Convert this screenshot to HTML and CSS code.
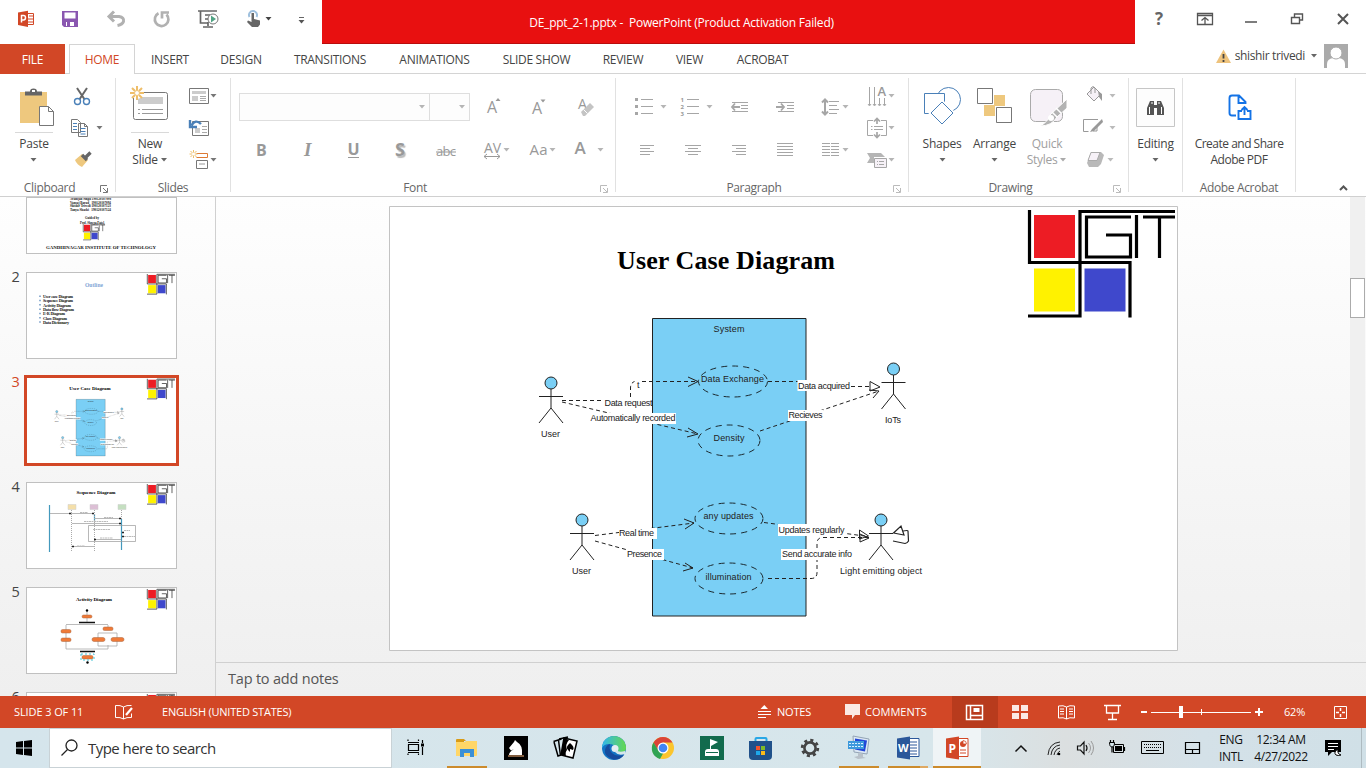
FILE: index.html
```html
<!DOCTYPE html>
<html lang="en">
<head>
<meta charset="utf-8">
<title>DE_ppt_2-1.pptx - PowerPoint</title>
<link rel="stylesheet" href="styles.css">
</head>
<body>
<svg class="defs" width="0" height="0">
  <defs>
    <g id="logo">
      <path d="M1034 215h41v43h-41z" fill="#ed1c24"/><path d="M1034 268.500h41v43h-41z" fill="#fff200"/><path d="M1084.500 268.500h41v43h-41z" fill="#3f48cc"/>
      <path d="M1029.500 210v52.500H1130v55M1028 316h52V211.500h95M1131 217h-44.500v40h44v-22H1106M1136.500 215v43M1143 217h32M1159.500 217v41" fill="none" stroke="#000" stroke-width="3.200"/>
    </g>
    <g id="actor"><circle cx="0" cy="0" r="6" fill="#7acff5" stroke="#222"/><path d="M0 6v19M-12 13.500h24M-12 40L0 25l12 15" fill="none" stroke="#222"/></g>
    <g id="diagram" class="diagram">
      <path d="M652.500 318.500h153.500v297.500h-153.500z" fill="#7acff5" stroke="#222"/>
      <g fill="none" stroke="#1c2a30" stroke-dasharray="6 5">
        <ellipse cx="733" cy="381.500" rx="34.500" ry="15.500"/><ellipse cx="729" cy="440.500" rx="31" ry="15.500"/>
        <ellipse cx="729" cy="518.500" rx="34" ry="15.500"/><ellipse cx="729" cy="578.500" rx="34" ry="15.500"/>
      </g>
      <g fill="none" stroke="#222" stroke-dasharray="4 3">
        <path d="M562 400.500h42M630.500 397v-9q0-5 4-6.500M642 381.500h55M562 402l136 32M768 381.500h30M851 386.500h19M760 431l119-40M595 535.500l99-12.500M595 541l98 27M764 522.500l104 14M768 578.500h43q6 0 6-6v-29q0-6 6-6h46"/>
      </g>
      <g fill="none" stroke="#222">
        <path d="M688 377l10 4.500-10 5M688 428l10 6-11 3M870 381.500l10 5.500-10 4zM869 390l10 1-6 7M684 519l10 4-9 6M685 563l8 5-10 3M859.500 530l9 6-9 3zM860 534l9 4-9 4z"/>
        <path d="M893.500 533l7.500-7 3 9zM903 531q5-1 5 0l.5 10q-1 2-3.500 2.500L893 541" stroke-width="1.200"/>
      </g>
      <use href="#actor" x="551" y="383"/><use href="#actor" x="893.500" y="369"/><use href="#actor" x="582" y="520"/><use href="#actor" x="881" y="520"/>
      <g fill="#fff"><path d="M604 398h48v10h-48zM590 413h86v11h-86zM797.500 380h53v11h-53zM788 410h35v11h-35zM619 528h38v11h-38zM627 549h37v11h-37zM778 524h67v12h-67zM781 549h71v11h-71z"/></g>
      <g fill="#222">
        <text x="637" y="388">t</text>
        <text x="713.500" y="332" textLength="31">System</text>
        <text x="701" y="382" textLength="63">Data Exchange</text><text x="713.500" y="440.500" textLength="31">Density</text>
        <text x="703.500" y="519" textLength="50">any updates</text><text x="705.500" y="579.500" textLength="46">illumination</text>
        <text x="541" y="437" textLength="19">User</text><text x="885" y="423" textLength="16">IoTs</text>
        <text x="572" y="573.500" textLength="19">User</text><text x="840" y="573.500" textLength="82">Light emitting object</text>
        <text x="604.500" y="405.500" textLength="48">Data request</text><text x="590.500" y="421" textLength="85">Automatically recorded</text>
        <text x="798" y="388.500" textLength="52">Data acquired</text><text x="788.500" y="418" textLength="34">Recieves</text>
        <text x="619" y="536" textLength="35">Real time</text><text x="627" y="557" textLength="35">Presence</text>
        <text x="778.500" y="532.500" textLength="66">Updates regularly</text><text x="782" y="557" textLength="70">Send accurate info</text>
      </g>
    </g>
    <path id="caret" d="M0 0h6l-3 3.500z"/>
    <path id="launch" d="M1.500 16V9.500H8M4 12l4 4M8.500 12v4.500H4" fill="none"/>
  </defs>
</svg>

<header class="titlebar">
  <div class="qat">
    <svg width="48" height="44" viewBox="0 0 48 44"><path d="M27 13.500h6.500v11H27" fill="#fff" stroke="#d24726"/><path d="M29 16h4M28 19h5M28 22h5" stroke="#d24726"/><path d="M18 12.500l10-1.800v16.300l-10-2z" fill="#d24726"/><path d="M21.500 22.500v-7h2q2 0 2 2.200t-2 2.200h-2" fill="none" stroke="#fff" stroke-width="1.500"/></svg>
    <svg width="44" height="44" viewBox="48 0 44 44"><path d="M62 11h16v16H64l-2-2z" fill="#8a57b0"/><path d="M64.500 12.500h11v6h-11zM66 22h8v4h-8z" fill="#fff"/><path d="M67 22h3v4h-3z" fill="#8a57b0"/></svg>
    <svg width="46" height="44" viewBox="92 0 46 44"><path d="M109 16.500h10q5.500 1 4.500 5-1 3-6 4M114 11.500l-5 5 5 5" fill="none" stroke="#b1b1b1" stroke-width="3"/></svg>
    <svg width="46" height="44" viewBox="138 0 46 44"><path d="M158.500 13.200a6.800 6.800 0 1 0 8 1.300M162 18.500v-6h7" fill="none" stroke="#b1b1b1" stroke-width="2.700"/></svg>
    <svg width="50" height="44" viewBox="184 0 50 44"><path d="M198 11h19M200.500 11v12h7M208 22v4M203 27h10M205 15h5M205 19h4" fill="none" stroke="#666" stroke-width="1.700"/><circle cx="213" cy="19" r="5" fill="#fff" stroke="#777"/><path d="M211 15.500l5 3.500-5 3.500z" fill="#51a384"/></svg>
    <svg width="46" height="44" viewBox="234 0 46 44"><path d="M249.500 17a4 4 0 1 1 7 0" fill="none" stroke="#9fc0de" stroke-width="2"/><path d="M251.500 13h2.500v6l6 1.500v4l-2 2.500h-6l-5-5 1-1.500 3.500 1.500z" fill="#666"/><use href="#caret" x="265.500" y="17" fill="#444"/></svg>
    <svg width="42" height="44" viewBox="280 0 42 44"><path d="M299 17.500h5" stroke="#666"/><use href="#caret" x="298.500" y="20" fill="#555"/></svg>
  </div>
  <div class="doc-title">DE_ppt_2-1.pptx -&nbsp; PowerPoint (Product Activation Failed)</div>
  <div class="winctl">
    <span class="help">?</span>
    <svg width="46" height="44" viewBox="1182 0 46 44"><path d="M1197.500 13.500h15v11h-15zM1197 15.500h16M1205 24v-6M1201.500 20.500l3.500-3 3.500 3" fill="none" stroke="#555" stroke-width="1.300"/></svg>
    <svg width="46" height="44" viewBox="1228 0 46 44"><path d="M1245 22h12" stroke="#666" stroke-width="1.700"/></svg>
    <svg width="46" height="44" viewBox="1274 0 46 44"><path d="M1291.500 17.500h8v6h-8zM1294.500 17v-3h8v6h-3" fill="none" stroke="#555" stroke-width="1.400"/></svg>
    <svg width="46" height="44" viewBox="1320 0 46 44"><path d="M1338 14l10 10M1348 14l-10 10" stroke="#555" stroke-width="2"/></svg>
  </div>
</header>

<nav class="tabs">
  <span class="tab file">FILE</span><span class="tab-gap"></span><span class="tab home">HOME</span>
  <span class="tab insert">INSERT</span><span class="tab design">DESIGN</span><span class="tab transitions">TRANSITIONS</span><span class="tab animations">ANIMATIONS</span><span class="tab slideshow">SLIDE SHOW</span><span class="tab review">REVIEW</span><span class="tab view">VIEW</span><span class="tab acrobat">ACROBAT</span>
  <div class="account">
    <svg width="20" height="24" viewBox="1214 44 20 24"><path d="M1222.500 49.500L1230 63h-15z" fill="#eec37d"/><path d="M1222.500 54v4.500M1222.500 60v2" stroke="#444" stroke-width="1.800"/></svg>
    <span>shishir trivedi</span>
    <svg class="drop" width="8" height="24" viewBox="0 0 8 24"><use href="#caret" x="1" y="10" fill="#666"/></svg>
    <svg width="24" height="24" viewBox="0 0 24 24"><path d="M0 0h24v24H0z" fill="#aaa"/><path d="M3 24v-4q0-5 6-6h6q6 1 6 6v4z" fill="#fff"/><circle cx="12" cy="9" r="6" fill="#fff" stroke="#aaa"/></svg>
  </div>
</nav>

<section class="ribbon">
  <div class="group clipboard">
    <div class="body">
      <div class="big paste"><svg width="68" height="56" viewBox="0 80 68 56"><path d="M20 92h27v31H20z" fill="#eec87e"/><path d="M25 95.500v-4h5q0-3 3.500-3t3.500 3h5v4z" fill="#666"/><path d="M32 90h3v2h-3z" fill="#fff"/><path d="M39.500 106.500h9l5 5v14h-14zM48.500 106.500v5h5" fill="#fff" stroke="#777"/><path d="M15 132.500h38" stroke="#d9d9d9"/></svg><span>Paste</span><svg width="68" height="16" viewBox="0 152 68 16"><use href="#caret" x="30.500" y="158" fill="#666"/></svg></div>
      <div class="tools">
        <svg width="47" height="32" viewBox="68 80 47 32"><path d="M77 88l8 12M87 88l-8 12" stroke="#666" stroke-width="2"/><g fill="#fff" stroke="#4a80b8" stroke-width="1.400"><circle cx="77.500" cy="101.500" r="3"/><circle cx="86.500" cy="101.500" r="3"/></g></svg>
        <svg width="47" height="32" viewBox="68 112 47 32"><g fill="#fff" stroke="#777"><path d="M71.500 119.500h6l3 3v10h-9zM78.500 123.500h6l3 3v10h-9zM84.500 123.500v3h3"/></g><path d="M73 123.500h4M73 126.500h4M73 129.500h4M80.500 128.500h5M80.500 131.500h5M80.500 134h5" stroke="#4a80b8"/><use href="#caret" x="96.500" y="126" fill="#777"/></svg>
        <svg width="47" height="32" viewBox="68 144 47 32"><path d="M82 154l6 6-6 7q-5-2-7-7z" fill="#eec87e"/><path d="M82 155l5 5M85 158l5.500-5.500" stroke="#666" stroke-width="3.300"/></svg>
      </div>
    </div>
    <div class="caption"><span>Clipboard</span><svg width="16" height="20" stroke="#777"><use href="#launch"/></svg></div>
  </div>
  <i class="sep"></i>
  <div class="group slides">
    <div class="body">
      <div class="big new"><svg width="68" height="56" viewBox="116 80 68 56"><rect x="133.500" y="92.500" width="34" height="27" rx="2" fill="#fff" stroke="#777"/><path d="M138 97h25v7h-25z" fill="#ccc"/><path d="M138 109.500h2M142 109.500h21M138 113.500h2M142 113.500h21" stroke="#999"/><circle cx="137" cy="93" r="6" fill="#fff"/><path d="M137 86v4M137 96v4M130 93h4M140 93h4M132 88l3 3M139 95l3 3M142 88l-3 3M135 95l-3 3" stroke="#eebe6a" stroke-width="2"/><circle cx="137" cy="93" r="2.500" fill="#fff" stroke="#eebe6a"/><path d="M131 132.500h38" stroke="#d9d9d9"/></svg><span>New</span><span>Slide <svg width="7" height="8"><use href="#caret" x="0" y="2" fill="#666"/></svg></span></div>
      <div class="tools">
        <svg width="46" height="32" viewBox="184 80 46 32"><path d="M189.500 88.500h19v15h-19z" fill="#fff" stroke="#777"/><path d="M192 91h14v3h-14zM192 96h6v5h-6z" fill="#ccc"/><path d="M200 96.500h6M200 98.500h6M200 100.500h6" stroke="#aaa"/><use href="#caret" x="210.500" y="94" fill="#777"/></svg>
        <svg width="46" height="32" viewBox="184 112 46 32"><path d="M192.500 121.500h16v14h-16z" fill="#fff" stroke="#777"/><path d="M195 128h5v5h-5z" fill="#ccc"/><path d="M202 126.500h5M202 129.500h5M202 132.500h5" stroke="#aaa"/><path d="M190 120v7h7M191.500 125.500q4-7 9.500-1.500" fill="none" stroke="#4a80b8" stroke-width="2.400"/></svg>
        <svg width="46" height="32" viewBox="184 144 46 32"><path d="M196.500 153.500h11v4h-11" fill="none" stroke="#dd7a35"/><path d="M196.500 160.500h11v8h-11z" fill="#fff" stroke="#777"/><path d="M199 163h6v2h-6z" fill="#ccc"/><path d="M193.500 150v8M189.500 154h8M190.500 151l6 6M196.500 151l-6 6" stroke="#eebe6a"/><circle cx="193.500" cy="154" r="1.500" fill="#fff"/><use href="#caret" x="210.500" y="158" fill="#777"/></svg>
      </div>
    </div>
    <div class="caption"><span>Slides</span></div>
  </div>
  <i class="sep"></i>
  <div class="group font">
    <div class="body">
      <div class="row">
        <div class="combo name"><svg width="8" height="8"><use href="#caret" x="1" y="2"/></svg></div><div class="combo size"><svg width="8" height="8"><use href="#caret" x="1" y="2"/></svg></div>
        <svg width="46" height="48" viewBox="469 80 46 48"><text x="487" y="113" class="m">A</text><path d="M495.500 101h5l-2.500-3z"/></svg>
        <svg width="46" height="48" viewBox="515 80 46 48"><text x="532" y="114" class="m">A</text><path d="M540.500 99.500h5l-2.500 3z"/></svg>
        <svg width="50" height="48" viewBox="561 80 50 48"><text x="578" y="109" class="m er">A</text><path d="M581 112l9-9 4 4-9 9h-2z" fill="#c4c4c4"/><path d="M583.500 109.500l4 4" stroke="#fff"/></svg>
      </div>
      <div class="row">
        <svg width="49" height="48" viewBox="236 128 49 48"><text x="256" y="156" class="b">B</text></svg>
        <svg width="46" height="48" viewBox="285 128 46 48"><text x="304" y="156" class="b i">I</text></svg>
        <svg width="46" height="48" viewBox="331 128 46 48"><text x="347.500" y="155" class="b">U</text><path d="M348 157.500h11" stroke="#999"/></svg>
        <svg width="46" height="48" viewBox="377 128 46 48"><text x="395" y="156" class="b s">S</text></svg>
        <svg width="46" height="48" viewBox="423 128 46 48"><text x="436" y="156" font-size="13" textLength="20">abc</text><path d="M436 152h20" stroke="#999"/></svg>
        <svg width="46" height="48" viewBox="469 128 46 48"><text x="484" y="153" font-size="14" textLength="17">AV</text><path d="M484 156.500h16M487 154l-3 2.500 3 2.500M497 154l3 2.500-3 2.500" fill="none" stroke="#999"/><use href="#caret" x="503.500" y="148"/></svg>
        <svg width="46" height="48" viewBox="515 128 46 48"><text x="529.500" y="155" font-size="15" textLength="18">Aa</text><use href="#caret" x="549.500" y="148"/></svg>
        <svg width="50" height="48" viewBox="561 128 50 48"><text x="574.500" y="154" class="fc">A</text><use href="#caret" x="597.500" y="148"/></svg>
      </div>
    </div>
    <div class="caption"><span>Font</span><svg width="16" height="20" stroke="#bbb"><use href="#launch"/></svg></div>
  </div>
  <i class="sep"></i>
  <div class="group paragraph">
    <div class="body">
      <div class="lists">
        <div class="row">
          <svg width="46" height="48" viewBox="624 80 46 48"><path d="M641 99.500h12M641 106.500h12M641 113.500h12"/><path d="M635 99.500h3M635 106.500h3M635 113.500h3" stroke-width="3"/><use href="#caret" x="660.500" y="105" class="f"/></svg>
          <svg width="46" height="48" viewBox="670 80 46 48"><path d="M687 99.500h12M687 106.500h12M687 113.500h12"/><g class="nums"><text x="680.500" y="102">1</text><text x="680.500" y="109">2</text><text x="680.500" y="116">3</text></g><use href="#caret" x="706.500" y="105" class="f"/></svg>
          <svg width="46" height="48" viewBox="716 80 46 48"><path d="M732 102.500h16M741 105.500h7M741 108.500h7M732 111.500h16"/><path d="M740 107h-8M735 103.500l-3 3.500 3 3.500" stroke-width="1.800"/></svg>
          <svg width="46" height="48" viewBox="762 80 46 48"><path d="M778 102.500h16M787 105.500h7M787 108.500h7M778 111.500h16"/><path d="M776 107h8M781 103.500l3 3.500-3 3.500" stroke-width="1.800"/></svg>
          <svg width="46" height="48" viewBox="808 80 46 48"><path d="M829 101.500h10M829 105.500h8M829 109.500h10M829 113.500h8"/><path d="M825 99v16M822 102.500l3-3 3 3M822 111.500l3 3 3-3" stroke-width="2"/><use href="#caret" x="842.500" y="105" class="f"/></svg>
        </div>
        <div class="row">
          <svg width="46" height="48" viewBox="624 128 46 48"><path d="M640 145.500h14M640 148.500h10M640 151.500h14M640 154.500h10"/></svg>
          <svg width="46" height="48" viewBox="670 128 46 48"><path d="M685 145.500h16M688 148.500h10M685 151.500h16M688 154.500h10"/></svg>
          <svg width="46" height="48" viewBox="716 128 46 48"><path d="M732 145.500h14M736 148.500h10M732 151.500h14M736 154.500h10"/></svg>
          <svg width="46" height="48" viewBox="762 128 46 48"><path d="M777 143.500h16M777 146.500h16M777 149.500h16M777 152.500h16M777 155.500h16"/></svg>
          <svg width="46" height="48" viewBox="808 128 46 48"><path d="M822 143.500h8M822 146.500h8M822 149.500h8M822 152.500h8M822 155.500h8M831 143.500h8M831 146.500h8M831 149.500h8M831 152.500h8M831 155.500h8"/><use href="#caret" x="842.500" y="148" class="f"/></svg>
        </div>
      </div>
      <div class="tools">
        <svg width="46" height="32" viewBox="854 80 46 32"><path d="M869.500 87v18M874.500 87v18M879.500 98v7M884.500 98v7M868 104l1.500 2 1.500-2M873 104l1.500 2 1.500-2M878 104l1.500 2 1.500-2M883 104l1.500 2 1.500-2"/><text x="877.500" y="96" class="vert">A</text><use href="#caret" x="888.500" y="94" class="f"/></svg>
        <svg width="46" height="32" viewBox="854 112 46 32"><path d="M873 120.500h-5.500v15h5.500M881 120.500h5.500v15H881M871 126.500h1.500M874 126.500h9M871 129.500h1.500M874 129.500h9"/><path d="M877 124v-5M874 121.500l3-3 3 3M877 132v5M874 134.500l3 3 3-3" stroke-width="1.700"/><use href="#caret" x="888.500" y="126" class="f"/></svg>
        <svg width="46" height="32" viewBox="854 144 46 32"><path class="solid" d="M867 153h14l4 4h-11v6h-7l3-5z"/><path d="M874.500 158.500h12v9h-12z" fill="#f6f1f7"/><path d="M877 161.500h1M879 161.500h5M877 164.500h1M879 164.500h5"/><use href="#caret" x="888.500" y="158" class="f"/></svg>
      </div>
    </div>
    <div class="caption"><span>Paragraph</span><svg width="16" height="20" stroke="#bbb"><use href="#launch"/></svg></div>
  </div>
  <i class="sep"></i>
  <div class="group drawing">
    <div class="body">
      <div class="big"><svg width="52" height="56" viewBox="916 80 52 56"><g fill="#fff" stroke="#4a80b8"><circle cx="948.500" cy="99.500" r="12"/><path d="M924.500 93.500h20v20h-20z"/><path d="M942 102l11 11-11 11-11-11z" stroke="#fff" stroke-width="4"/><path d="M942 102l11 11-11 11-11-11z"/></g></svg><span>Shapes</span><svg width="52" height="16" viewBox="916 152 52 16"><use href="#caret" x="939.500" y="158" fill="#666"/></svg></div>
      <div class="big"><svg width="53" height="56" viewBox="968 80 53 56"><path d="M994 95h11v11h-11zM984 105h11v11h-11z" fill="#eec87e"/><path d="M977.500 88.500h15v15h-15zM996.500 107.500h15v15h-15z" fill="#fff" stroke="#777"/></svg><span>Arrange</span><svg width="53" height="16" viewBox="968 152 53 16"><use href="#caret" x="991.500" y="158" fill="#666"/></svg></div>
      <div class="big off"><svg width="52" height="56" viewBox="1021 80 52 56"><rect x="1030.500" y="89.500" width="32" height="32" rx="5" fill="#f6f1f7" stroke="#aaa"/><path d="M1067 99v9l-10 9q-5 9-17 9 8-4 10-11z" fill="#b3b3b3" stroke="#fff"/><path d="M1052 112l5 5M1056 108l5 5" stroke="#fff" stroke-width="1.500"/><circle cx="1051" cy="118" r="3" fill="#fff"/></svg><span>Quick</span><span>Styles <svg width="7" height="8"><use href="#caret" x="0" y="2" fill="#aaa"/></svg></span></div>
      <div class="tools">
        <svg width="55" height="32" viewBox="1073 80 55 32"><path d="M1087 94l7-7 7 7-7 7zM1091 94v-6q2-3 4 0v5" fill="#f6f1f7" stroke="#999"/><path d="M1098 91l4 3v7l-3-4z" fill="#999"/><use href="#caret" x="1109.500" y="94" fill="#bbb"/></svg>
        <svg width="55" height="32" viewBox="1073 112 55 32"><path d="M1098 119.500h-14.500v12h5M1097 125v6h-4" fill="none" stroke="#999"/><path d="M1102 119l-10 10-2 3 4-1 9-9z" fill="#999"/><use href="#caret" x="1109.500" y="126" fill="#bbb"/></svg>
        <svg width="55" height="32" viewBox="1073 144 55 32"><path d="M1091 152h10l3 3-3 9-3 3h-9l-2-4z" fill="#b9b9b9"/><path d="M1091 152.500h9l-3 8h-9z" fill="#f6f1f7" stroke="#aaa"/><use href="#caret" x="1107.500" y="158" fill="#bbb"/></svg>
      </div>
    </div>
    <div class="caption"><span>Drawing</span><svg width="16" height="20" stroke="#bbb"><use href="#launch"/></svg></div>
  </div>
  <i class="sep"></i>
  <div class="group editing">
    <div class="body"><div class="big"><svg width="53" height="56" viewBox="1129 80 53 56"><path d="M1136.500 88.500h38v38h-38z" fill="#fdfdfd" stroke="#c6c6c6"/><path d="M1147 115v-7l3-7h4v4h3v-4h4l3 7v7h-7v-7h-3v7z" fill="#555"/><path d="M1149.500 107v7M1161.500 107v7M1152 102v2M1159 102v2" stroke="#fff"/></svg><span>Editing</span><svg width="53" height="16" viewBox="1129 152 53 16"><use href="#caret" x="1152.500" y="158" fill="#666"/></svg></div></div>
    <div class="caption"></div>
  </div>
  <i class="sep"></i>
  <div class="group adobe">
    <div class="body"><div class="big"><svg width="112" height="56" viewBox="1183 80 112 56"><path d="M1236 115.500h-4q-2.500 0-2.500-2.500v-15q0-2.500 2.500-2.500h7l6.500 6.500v2M1238.500 96v7h6M1242 111h-3.500v8h12v-8h-3.500M1244.500 115v-7.500M1241.500 110l3-3 3 3" fill="none" stroke="#1473e6" stroke-width="1.900"/></svg><span>Create and Share</span><span>Adobe PDF</span></div></div>
    <div class="caption"><span>Adobe Acrobat</span></div>
  </div>
  <i class="sep"></i>
  <svg class="collapse" width="24" height="20" viewBox="1332 176 24 20"><path d="M1340 190l3.500-3.500 3.500 3.500" fill="none" stroke="#555" stroke-width="2"/></svg>
</section>

<main class="work">
  <aside class="thumbs">
    <div class="item first"><b></b><svg class="thumb" width="151" height="57" viewBox="26 197 151 57"><g class="tiny" fill="#111"><text x="70" y="200" textLength="41" lengthAdjust="spacingAndGlyphs">Avanijad Singh 190120107098</text><text x="70" y="203.500" textLength="41" lengthAdjust="spacingAndGlyphs">Vansaj Barad &#160; 190120107094</text><text x="70" y="207" textLength="41" lengthAdjust="spacingAndGlyphs">Shishir Trivedi 190120107123</text><text x="70" y="210.800" textLength="41" lengthAdjust="spacingAndGlyphs">Tanya Shashi &#160; 190120107124</text><text x="85" y="218.500" textLength="14" lengthAdjust="spacingAndGlyphs">Guided by</text><text x="80" y="223.500" textLength="24" lengthAdjust="spacingAndGlyphs">Prof. Shreya Patel</text><text x="46" y="249" textLength="110" lengthAdjust="spacingAndGlyphs" class="inst">GANDHINAGAR INSTITUTE OF TECHNOLOGY</text></g><use href="#logo" transform="translate(83 224) scale(.15) translate(-1028 -210)"/></svg></div>
    <div class="item"><b>2</b><svg class="thumb" width="151" height="87" viewBox="26 272 151 87"><text x="85" y="287" class="ttl out" textLength="18" lengthAdjust="spacingAndGlyphs">Outline</text><g class="tiny" fill="#111"><text x="43" y="298" textLength="30">User case Diagram</text><text x="43" y="302.300" textLength="30">Sequence Diagram</text><text x="43" y="306.600" textLength="28">Activity Diagram</text><text x="43" y="310.900" textLength="31">Data flow Diagram</text><text x="43" y="315.200" textLength="22">E-R Diagram</text><text x="43" y="319.500" textLength="24">Class Diagram</text><text x="43" y="323.800" textLength="26">Data Dictionary</text></g><path d="M40 295.500v29" stroke="#6d96c4" stroke-width="1.500" stroke-dasharray="1.500 2.800"/><use href="#logo" transform="translate(147 274) scale(.19) translate(-1028 -210)"/></svg></div>
    <div class="item active"><b>3</b><svg class="thumb" width="155" height="91" viewBox="24 375 155 91"><g transform="translate(26 378) scale(.19) translate(-389 -206)"><text x="617" y="269" class="slide-title" textLength="218">User Case Diagram</text><use href="#diagram"/><use href="#logo" x="-2"/></g></svg></div>
    <div class="item"><b>4</b><svg class="thumb" width="151" height="87" viewBox="26 482 151 87"><text x="76.500" y="494" class="ttl" textLength="39">Sequence Diagram</text><path d="M68 504.500h8v5h-8z" fill="#f4dfaa" stroke="#ccc" stroke-width=".5"/><path d="M90 504.500h8v5h-8z" fill="#dcbfd5" stroke="#ccc" stroke-width=".5"/><path d="M118 504.500h8v5h-8z" fill="#c5dfc1" stroke="#ccc" stroke-width=".5"/><path d="M49.500 505v47M94.500 514v7M121.500 519v31" stroke="#4399bd" stroke-width="1.200"/><path d="M71.500 510v42M94.500 510v42M121.500 510v9" stroke="#aaa" stroke-dasharray="1 1"/><path d="M50 513.500h44M95 518.500h26M72 523.500h49M88.500 525.500h47v16h-47zM94 539.500h27M72 546.500h22" fill="none" stroke="#999" stroke-width=".7"/><path d="M80 512.500h8M104 517.500h9M84 521.500h24M93 529.500h17M100 538h13M77 546h8M124 530.500h6M124 536.500h12" stroke="#bbb" stroke-dasharray="2 .5"/><path d="M69 513.500h2M92 513.500h2M119 518.500h2M119 523.500h2M94 539.500h2M72 546.500h2M122 532.500h2M122 536.500h2" stroke="#222" stroke-width="1.500"/><use href="#logo" transform="translate(147 484) scale(.19) translate(-1028 -210)"/></svg></div>
    <div class="item"><b>5</b><svg class="thumb" width="151" height="87" viewBox="26 587 151 87"><text x="76" y="601" class="ttl" textLength="36">Activity Diagram</text><path d="M66 624.500h42M66 625v24h42v-4M87 610v12M108 625v4M98 633v13h19v-13z" fill="none" stroke="#aaa" stroke-width=".8"/><g fill="#ef7a38" stroke="#a86842" stroke-width=".5"><rect x="82" y="615" width="10" height="3" rx="1.500"/><rect x="61" y="629.500" width="10" height="3.500" rx="1.500"/><rect x="61" y="638" width="10" height="3.500" rx="1.500"/><rect x="103" y="627" width="10" height="3.500" rx="1.500"/><rect x="92" y="637.500" width="13" height="4" rx="2"/><rect x="111" y="637.500" width="13" height="4" rx="2"/><rect x="82" y="655.500" width="11" height="3.500" rx="1.500"/></g><path d="M79 622.500h16M80 651.500h15" stroke="#111" stroke-width="1.500"/><path d="M81 654h13v6H81z" fill="none" stroke="#45c6d8" stroke-dasharray="2 2"/><circle cx="87" cy="610.500" r="1.200"/><circle cx="87.500" cy="662.500" r="1.200"/><use href="#logo" transform="translate(147 589) scale(.19) translate(-1028 -210)"/></svg></div>
    <div class="item"><b>6</b><svg class="thumb" width="151" height="87" viewBox="26 692 151 87"><use href="#logo" transform="translate(147 694) scale(.19) translate(-1028 -210)"/></svg></div>
  </aside>
  <div class="editor">
    <div class="stage">
      <svg class="slide" width="789" height="445" viewBox="389 206 789 445"><path d="M389.500 206.500h788v444h-788z" fill="#fff" stroke="#c3c3c3"/><text x="617" y="269" class="slide-title" textLength="218">User Case Diagram</text><use href="#diagram"/><use href="#logo"/></svg>
      <div class="scroll"><div class="grip"></div></div>
    </div>
    <div class="notes">Tap to add notes</div>
  </div>
</main>

<footer class="status">
  <span class="slide-no">SLIDE 3 OF 11</span>
  <svg width="62" height="32" viewBox="100 696 62 32"><path d="M123.500 707q-3-2-8-1.500v12q5-.5 8 1.500zM123.500 707q3-2 8-1.500M123.500 719q3-2 8-1.500v-4" fill="none" stroke="#fff"/><path d="M126 715l6-7" stroke="#fff" stroke-width="2.200"/></svg>
  <span class="lang">ENGLISH (UNITED STATES)</span>
  <svg width="27" height="32" viewBox="750 696 27 32"><path d="M758 711.500h13M758 714.500h13M758 717.500h8" stroke="#fff"/><path d="M760.500 709h7.500l-3.700-4z" fill="#fff"/></svg>
  <span class="nt">NOTES</span>
  <svg width="25" height="32" viewBox="840 696 25 32"><path d="M845 704h15v11h-5l-3 4v-4h-7z" fill="#fbe9e4"/></svg>
  <span class="cm">COMMENTS</span>
  <svg class="on" width="46" height="32" viewBox="952 696 46 32"><path d="M966.500 705.500h16v14h-16zM970.500 705v15M970.500 715.500h12" fill="none" stroke="#fff" stroke-width="1.500"/><path d="M973.500 708h6v4h-6z" fill="#fff"/></svg>
  <svg width="46" height="32" viewBox="998 696 46 32"><path d="M1012 705h7v6h-7zM1021 705h7v6h-7zM1012 713h7v6h-7zM1021 713h7v6h-7z" fill="#fbe9e4"/></svg>
  <svg width="46" height="32" viewBox="1044 696 46 32"><path d="M1066.500 707q-3-2-8-1v12q5-1 8 1 3-2 8-1v-12q-5-1-8 1zv12M1060 709h4M1060 711.500h4M1060 714h4M1069 709h4M1069 711.500h4M1069 714h4" fill="none" stroke="#fff"/></svg>
  <svg width="46" height="32" viewBox="1090 696 46 32"><path d="M1104 705.500h17M1106.500 706v7h12v-7M1112.500 713v6M1108 719.500h9" fill="none" stroke="#fff" stroke-width="1.300"/></svg>
  <svg width="136" height="32" viewBox="1136 696 136 32"><path d="M1151 712.500h100M1201.500 709v6" stroke="#fff"/><path d="M1179 706h4v12h-4z" fill="#fff"/><path d="M1141 712h6M1255 712h8M1259 708v8" stroke="#fff" stroke-width="2"/></svg>
  <span class="pct">62%</span>
  <svg width="36" height="32" viewBox="1324 696 36 32"><path d="M1334.500 706.500h12v12h-12z" fill="none" stroke="#fff"/><path d="M1340.500 708v3M1340.500 714v3M1336 712.500h3M1342 712.500h3" stroke="#fff" stroke-width="1.500"/></svg>
</footer>

<footer class="taskbar">
  <svg width="48" height="40" viewBox="0 728 48 40"><path d="M16 742l7-1v6.500h-7zM24 741l8-1v7.500h-8zM16 748.500h7v6.500l-7-1zM24 748.500h8v7.500l-8-1z"/></svg>
  <div class="search"><svg width="39" height="38" viewBox="49 729 39 38"><circle cx="70.500" cy="745.500" r="5.500" fill="none" stroke="#222" stroke-width="1.300"/><path d="M66.500 749.500l-6 6" stroke="#222" stroke-width="1.300"/></svg><span>Type here to search</span></div>
  <svg width="49" height="40" viewBox="392 728 49 40"><path d="M408 741v-1.500M418.500 741v-1.500M408 742.500h11M408.500 744.500h10v6h-10zM408 752.500h11M408 755v-1.500M418.500 755v-1.500M422.500 740v3M422.500 747v8" fill="none" stroke="#000" stroke-width="1.200"/><path d="M421 743.500h3v3h-3z"/></svg>
  <svg width="50" height="40" viewBox="441 728 50 40"><path d="M456 740q0-1 1-1h7l2 2h-2v4h-8z" fill="#d99b16"/><path d="M456 742h9l1-1h11v14q0 1-1 1h-20z" fill="#ffd667"/><path d="M460 757v-8h14v8h-4v-4h-6v4z" fill="#3b90d6"/><path d="M447 766h40v2h-40z" fill="#cc8b2c"/></svg>
  <svg width="49" height="40" viewBox="491 728 49 40"><path d="M504 736h24v24h-24z"/><path d="M508 755h16v2h-16z" fill="#805b3d"/><path d="M509 755q0-3 5-6l-3 1.500-2-2.500 5-6 1-2 2 2q6 3 5 13z" fill="#fff"/></svg>
  <svg width="49" height="40" viewBox="540 728 49 40"><path d="M553.500 741.500l8-2.500M554 742l4 14 3-1M559 739l9-2M558.500 740l2 16" fill="none" stroke="#000" stroke-width="1.500"/><path d="M564 738l13 3-4 17-12-3z" fill="#fff" stroke="#000" stroke-width="1.500"/><path d="M564 738l-3 17 5 1q-1-4 1-6-2-6 2-10z"/><path d="M570 743q5 4 3 7l-3-1v3l-2-2q-3-3 2-7z"/></svg>
  <svg width="49" height="40" viewBox="589 728 49 40"><defs><linearGradient id="edge"><stop stop-color="#31b7ed"/><stop offset="1" stop-color="#65d84f"/></linearGradient></defs><circle cx="614" cy="748" r="12" fill="#1274c4"/><path d="M602 748a12 12 0 0 1 24 0q0 5-6 5-5 0-4-4-1-5-7-5-5 0-7 4z" fill="url(#edge)"/><path d="M610 744q-2 8 5 11 5 1 9 0-5 6-12 4-8-3-7-9 1-5 5-6z" fill="#164c9d"/><circle cx="615" cy="748.500" r="3.500" fill="#e3eef2"/><path d="M616 750q3 3 9 1v3q-7 2-10-2z" fill="#d5e5eb"/></svg>
  <svg width="49" height="40" viewBox="638 728 49 40"><circle cx="663" cy="748" r="11" fill="#fbc52d"/><path d="M653.500 742.500a11 11 0 0 1 19 0H663l-5 8z" fill="#db4437"/><path d="M653.500 742.500l5 8 4.500 3-3 5.500a11 11 0 0 1-6.500-16.500z" fill="#30a353"/><circle cx="663" cy="748" r="5.500" fill="#fff"/><circle cx="663" cy="748" r="4.300" fill="#4285f4"/></svg>
  <svg width="49" height="40" viewBox="687 728 49 40"><path d="M700 736h24v24h-24z" fill="#126b4d"/><path d="M705 752q0-3 3-3h8q3 0 3 3v4h-14z" fill="#fff"/><path d="M706 752.500h12" stroke="#126b4d"/><path d="M710 750v-11l8 3-7 4v4z" fill="#fff"/></svg>
  <svg width="49" height="40" viewBox="736 728 49 40"><path d="M755.500 743v-4q0-1 1-1h9q1 0 1 1v4" fill="none" stroke="#28a7e6" stroke-width="2"/><path d="M749 741h23v15q0 4-4 4h-15q-4 0-4-4z" fill="#20518a"/><path d="M756 746h4v4h-4z" fill="#f2542d"/><path d="M761 746h4v4h-4z" fill="#80bb27"/><path d="M756 751h4v4h-4z" fill="#1ea7ea"/><path d="M761 751h4v4h-4z" fill="#fbba19"/></svg>
  <svg width="49" height="40" viewBox="785 728 49 40"><circle cx="810" cy="748" r="7.800" fill="none" stroke="#444" stroke-width="2.800" stroke-dasharray="3.063 3.063"/><circle cx="810" cy="748" r="5.600" fill="none" stroke="#444" stroke-width="2.600"/></svg>
  <svg width="49" height="40" viewBox="834 728 49 40"><path d="M853 736l16 3-2 15-13-2z" fill="#dce8f4" stroke="#93a4b5"/><path d="M855 738.500l12 2-2 11-10-2z" fill="#2146d7"/><path d="M848 741h16v8h-16z" fill="#3c99dc"/><path d="M849 743.500h14M849 746.500h14" stroke="#d9f0ff" stroke-dasharray="2 1"/><path d="M858 753l5 1v3l3 1-8 1-4-2 4-1z" fill="#b8c1c9"/><path d="M839 766h40v2h-40z" fill="#cc8b2c"/></svg>
  <svg width="50" height="40" viewBox="883 728 50 40"><path d="M907 738.500h12v18h-12z" fill="#fff" stroke="#2b579a"/><path d="M910 742h7M910 745h7M910 748h7M910 751h7M910 754h7" stroke="#2b579a"/><path d="M897 738.500l13-2v23l-13-2z" fill="#2b579a"/><text x="898" y="752" class="app word">W</text><path d="M888 766h40v2h-40z" fill="#cc8b2c"/><path d="M920 766h8v2h-8z" fill="#dfa962"/></svg>
  <svg class="running" width="48" height="40" viewBox="933 728 48 40"><path d="M957 738.500h11v18h-11z" fill="#fff" stroke="#d24726"/><circle cx="963" cy="744" r="3" fill="#d24726"/><path d="M963 744v-3.500a3.500 3.500 0 0 1 3.500 3.500z" fill="#fff" stroke="#d24726" stroke-width=".8"/><path d="M960 750h6M960 753h6" stroke="#d24726"/><path d="M946 738.500l13-2v23l-13-2z" fill="#d24726"/><text x="948.500" y="752.500" class="app">P</text><path d="M933 766h48v2h-48z" fill="#cc8b2c"/></svg>
  <svg class="tray" width="55" height="40" viewBox="981 728 55 40"><path d="M1015.500 751.500l5.500-5.500 5.500 5.500" fill="none" stroke="#111" stroke-width="1.500"/></svg>
  <svg width="33" height="40" viewBox="1036 728 33 40"><g fill="none" stroke="#222"><path d="M1048 755q1-12 12-13M1051 755q1-9 9-10M1054 755q1-6 6-7M1057 755q1-3 3-4"/></g><circle cx="1059" cy="754" r="1.300"/></svg>
  <svg width="31" height="40" viewBox="1069 728 31 40"><path d="M1077.500 746h3l3.500-4v12l-3.500-4h-3zM1086 745q2 3 0 6" fill="none" stroke="#111" stroke-width="1.200"/><path d="M1088.500 743q4 5 0 10M1091 741q5 7 0 14" fill="none" stroke="#999"/></svg>
  <svg width="36" height="40" viewBox="1100 728 36 40"><path d="M1113.500 744.500h10v8h-10z" fill="none" stroke="#000"/><path d="M1115 746h7v5h-7z"/><path d="M1124.500 747v4M1110.500 740v3M1113.500 740v3M1112 746v6.500" stroke="#000" stroke-width="1.200"/><path d="M1109.500 742.500h5q0 4.500-2.500 4.500t-2.500-4.500z" fill="#d5e5eb" stroke="#000"/></svg>
  <svg width="36" height="40" viewBox="1136 728 36 40"><path d="M1141.500 741.500h22v12h-22z" fill="none" stroke="#000"/><path d="M1144 744.500h18M1144 747.500h18" stroke="#000" stroke-dasharray="1 1"/><path d="M1146 750.500h13" stroke="#000"/></svg>
  <svg width="40" height="40" viewBox="1172 728 40 40"><path d="M1185.500 742.500h14v11h-14zM1185 749.500h15M1192.500 750v4" fill="none" stroke="#000" stroke-width="1.200"/></svg>
  <div class="tray-text lang2"><span>ENG</span><span>INTL</span></div>
  <div class="tray-text clock"><span>12:34 AM</span><span>4/27/2022</span></div>
  <svg width="54" height="40" viewBox="1312 728 54 40"><path d="M1325 740h16v12h-9l-4 4v-4h-3z"/><path d="M1328 743.500h10M1328 746.500h10M1328 749.500h6" stroke="#fff"/><path d="M1338 749q-5 3-2 6 2 1 5 0-4-1-3-6z" fill="#fff" stroke="#000"/><path d="M1361.500 728v40" stroke="#aebbc1"/></svg>
</footer>
</body>
</html>
```
FILE: styles.css
```css
* { box-sizing: border-box; }
body { margin: 0; width: 1366px; height: 768px; overflow: hidden; background: #fff; color: #444; font: 12px/16px "Open Sans", "Noto Sans", sans-serif; letter-spacing: -.35px; display: flex; flex-direction: column; }
svg { display: block; flex: none; }
.defs { position: absolute; }

.titlebar { display: flex; height: 44px; flex: none; }
.qat, .winctl { display: flex; }
.doc-title { width: 813px; height: 44px; background: #e81010; border-bottom: 1px solid #b90c0c; color: #fff; text-align: center; line-height: 45px; padding-right: 94px; letter-spacing: -.22px; }
.winctl { padding-left: 1px; }
.help { width: 46px; text-align: center; font-size: 17px; font-weight: 700; line-height: 38px; color: #666; }

.tabs { display: flex; height: 30px; flex: none; }
.tab, .tab-gap { border-bottom: 1px solid #d4d4d4; text-align: center; line-height: 31px; letter-spacing: -.3px; white-space: nowrap; }
.tab-gap { width: 4px; }
.file { width: 65px; background: #d24726; border-color: #d24726; color: #fff; }
.home { width: 66px; border: 1px solid #d4d4d4; border-bottom: 0; line-height: 29px; color: #d24726; }
.insert { width: 70px; } .design { width: 72px; } .transitions { width: 106px; } .animations { width: 103px; }
.slideshow { width: 101px; } .review { width: 72px; } .view { width: 61px; } .acrobat { width: 85px; }
.account { flex: 1; display: flex; border-bottom: 1px solid #d4d4d4; padding-right: 18px; justify-content: flex-end; line-height: 24px; }
.account svg + span { margin-right: 5px; }
.drop { margin-right: 6px; }

.ribbon { display: flex; height: 123px; flex: none; border-bottom: 1px solid #d0d0d0; }
.sep { width: 1px; height: 114px; margin-top: 4px; background: #e1e1e1; flex: none; }
.group { padding-top: 6px; flex: none; }
.body { display: flex; height: 96px; }
.caption { display: flex; height: 20px; line-height: 24px; color: #666; letter-spacing: -.35px; }
.caption span { flex: 1; text-align: center; }
.caption svg { fill: none; }
.clipboard { width: 115px; } .slides { width: 114px; } .font { width: 384px; } .paragraph { width: 292px; }
.drawing { width: 219px; } .editing { width: 53px; } .adobe { width: 112px; }
.big { display: flex; flex-direction: column; align-items: center; white-space: nowrap; letter-spacing: -.25px; }
.big span { line-height: 16px; }
.big span svg { display: inline-block; }
.adobe .big { letter-spacing: -.5px; }
.off { color: #a0a0a0; }
.row { display: flex; height: 48px; }
.font .body { display: block; padding-left: 5px; }
.font .row svg { fill: #999; letter-spacing: 0; }
.font .row use { fill: #b5b5b5; }
.combo { border: 1px solid #dedede; background: #fdfdfd; height: 28px; margin-top: 13px; padding: 9px 3px; display: flex; justify-content: flex-end; }
.name { width: 191px; margin-left: 3px; }
.size { width: 41px; margin-left: -1px; margin-right: -1px; }
.b { font-size: 16px; font-weight: 700; }
.m { font-size: 16px; font-weight: 500; }
.er { font-size: 14px; }
.fc { font-size: 17px; font-weight: 600; }
.i { font-family: "Liberation Serif", serif; font-style: italic; font-size: 19px; }
.s { font-size: 18px; text-shadow: 1.5px 1.5px 1px #bbb; }
.paragraph .body { padding-left: 8px; }
.paragraph .body svg { stroke: #a6a6a6; fill: none; }
.f, .solid { fill: #b5b5b5; stroke: none; }
.nums, .vert { fill: #999; stroke: none; font-size: 6px; font-weight: 700; }
.vert { font-size: 13px; font-weight: 600; }
.drawing .body { padding-left: 7px; }
.collapse { margin: 102px 10px 0 auto; }

.work { display: flex; height: 499px; flex: none; background: linear-gradient(#fefefe, #efefef); }
.thumbs { width: 216px; height: 499px; overflow: hidden; border-right: 1px solid #d0d0d0; }
.item { display: flex; height: 105px; }
.item b { width: 26px; padding-left: 11.5px; font-weight: 400; font-size: 14.500px; line-height: 10px; }
.first { height: 75px; }
.thumb { background: #fff; outline: 1px solid #c0c0c0; outline-offset: -1px; }
.active { color: #d24726; }
.active b { width: 24px; }
.active .thumb { outline: 3px solid #d24726; outline-offset: -3px; margin-top: -2px; }
.tiny, .ttl { font: bold 4.200px "Liberation Serif", serif; letter-spacing: 0; }
.ttl { font-size: 5px; }
.out { fill: #7fa5d5; font-size: 5.500px; }
.inst { font-size: 4.700px; }
.slide-title { font: bold 26px "Liberation Serif", serif; letter-spacing: 0; fill: #000; }
.diagram { font: 9px "Liberation Sans", Arial, sans-serif; letter-spacing: 0; }
.editor { flex: 1; display: flex; flex-direction: column; }
.stage { height: 465px; display: flex; padding: 0; }
.slide { margin: 9px 172px 0 173px; }
.scroll { width: 15px; height: 445px; background: #f0f0f0; padding-top: 81px; }
.grip { height: 40px; background: #fff; border: 1px solid #ababab; }
.notes { flex: 1; border-top: 1px solid #d0d0d0; padding: 8px 11px 8px 12px; font-size: 14.500px; letter-spacing: -.2px; color: #555; }

.status { display: flex; height: 32px; flex: none; background: #d24726; color: #fff; line-height: 32px; font-size: 11px; letter-spacing: -.22px; }
.slide-no { width: 100px; padding-left: 14px; letter-spacing: -.1px; line-height: 31px; }
.lang { width: 588px; }
.nt { width: 63px; }
.cm { width: 87px; letter-spacing: 0; }
.on { background: #b83b1d; }
.pct { width: 52px; padding-left: 12px; }

.taskbar { display: flex; height: 40px; flex: none; background: linear-gradient(90deg, #d5e5ec 0, #d7e6eb 70%, #dbdfe0 78%, #d4e1e8 88%, #d0e0e7); color: #111; }
.search { display: flex; width: 343px; height: 40px; margin-left: 1px; background: #fff; border: 1px solid #c9d2d6; font-size: 15px; line-height: 38px; letter-spacing: -.55px; color: #333; }
.search span { margin-left: -1px; }
.running { background: #eff4f6; }
.app { fill: #fff; font: bold 12px "Open Sans", sans-serif; letter-spacing: 0; }
.word { font-size: 11px; }
.tray-text { display: flex; flex-direction: column; padding-top: 3px; line-height: 17px; text-align: center; }
.lang2 { width: 38px; }
.clock { width: 62px; }
```
